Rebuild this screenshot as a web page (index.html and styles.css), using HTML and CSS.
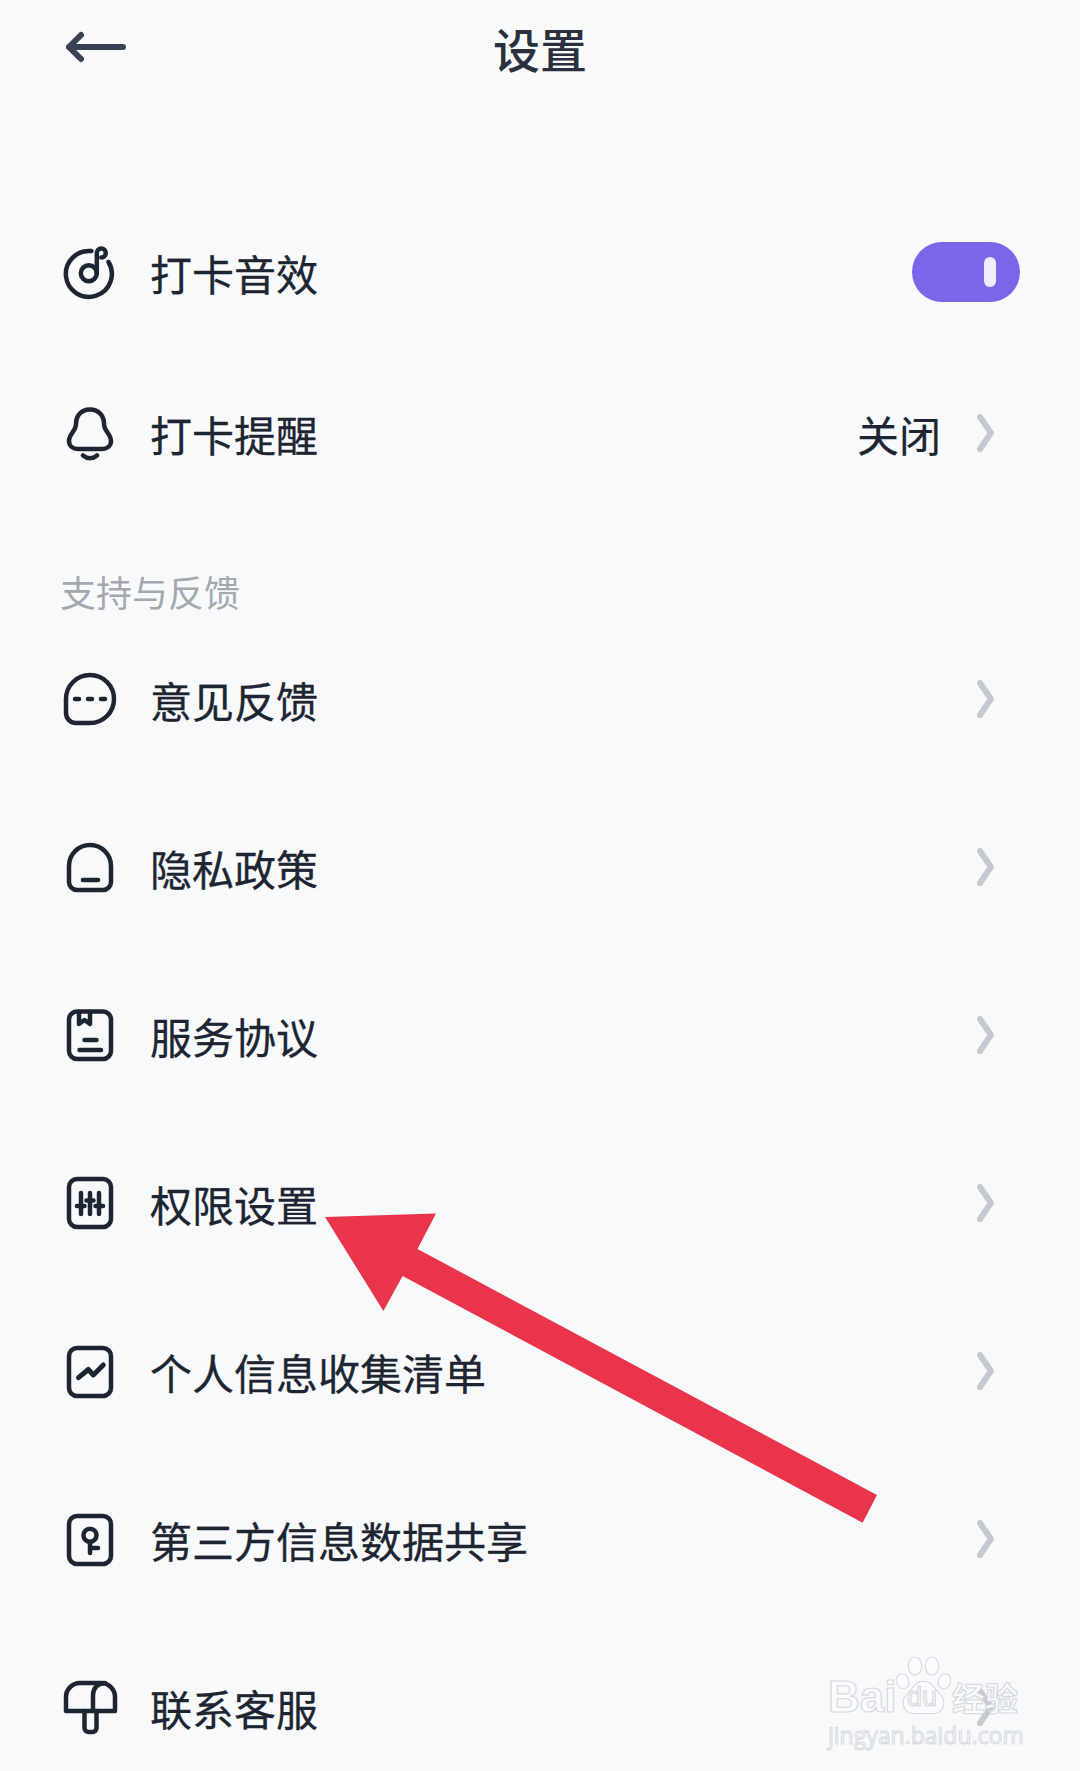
FILE: index.html
```html
<!DOCTYPE html>
<html lang="zh-CN">
<head>
  <meta charset="UTF-8">
  <title>设置</title>
  <link rel="stylesheet" href="styles.css">
</head>
<body>
  <div class="page">
    <header class="nav">
      <svg class="back" viewBox="0 0 68 36"><path d="M7 18H61M19 6L7 18L19 30"/></svg>
      <h1 class="nav-title">设置</h1>
    </header>

    <section class="group group-first">
      <div class="row row-tall">
        <svg class="icon" viewBox="0 0 60 60"><path d="M31.500 9.100A23 23 0 1 0 48.500 20"/><circle cx="28.800" cy="31.300" r="8"/><path d="M36.800 31V11a4.500 4.500 0 1 1 4.500 4.500"/></svg>
        <span class="label">打卡音效</span>
        <span class="toggle"><i class="knob"></i></span>
      </div>
      <div class="row row-tall">
        <svg class="icon" viewBox="0 0 60 60"><path d="M30 6.500C21 6.500 16 13 16 21C16 28 9 31 9 38C9 43 13 46 18 46H42C47 46 51 43 51 38C51 31 44 28 44 21C44 13 39 6.500 30 6.500Z"/><path d="M23 52.500Q30 58 37 52.500"/></svg>
        <span class="label">打卡提醒</span>
        <span class="value">关闭</span>
        <svg class="chevron" viewBox="0 0 17 38"><path d="M3 3L14 19L3 35"/></svg>
      </div>
    </section>

    <h2 class="group-title">支持与反馈</h2>

    <section class="group">
      <div class="row">
        <svg class="icon" viewBox="0 0 60 60"><path d="M30 6a24 24 0 0 1 0 48H16a10 10 0 0 1-10-10V30A24 24 0 0 1 30 6Z"/><path d="M15 30h4M28 30h4M41 30h4"/></svg>
        <span class="label">意见反馈</span>
        <svg class="chevron" viewBox="0 0 17 38"><path d="M3 3L14 19L3 35"/></svg>
      </div>
      <div class="row">
        <svg class="icon" viewBox="0 0 60 60"><path d="M9 29a21 21 0 0 1 42 0v16a8 8 0 0 1-8 8H17a8 8 0 0 1-8-8Z"/><path d="M23 43H38"/></svg>
        <span class="label">隐私政策</span>
        <svg class="chevron" viewBox="0 0 17 38"><path d="M3 3L14 19L3 35"/></svg>
      </div>
      <div class="row">
        <svg class="icon" viewBox="0 0 60 60"><rect x="9" y="6.500" width="42" height="47.500" rx="8"/><path d="M19 7V19L24.500 15L30 19V7"/><path d="M24.500 35H36.500M19.500 45H41"/></svg>
        <span class="label">服务协议</span>
        <svg class="chevron" viewBox="0 0 17 38"><path d="M3 3L14 19L3 35"/></svg>
      </div>
      <div class="row">
        <svg class="icon" viewBox="0 0 60 60"><rect x="9" y="6" width="42" height="48" rx="8"/><path d="M21 20V41M30 20V41M39 20V41M17 33H24.500M26.500 27.500H33.500M35.500 33H43"/></svg>
        <span class="label">权限设置</span>
        <svg class="chevron" viewBox="0 0 17 38"><path d="M3 3L14 19L3 35"/></svg>
      </div>
      <div class="row">
        <svg class="icon" viewBox="0 0 60 60"><rect x="9" y="7" width="42" height="48" rx="8"/><path class="thick" d="M18.500 36.700L28.300 28.500L33.300 34L43.300 24"/></svg>
        <span class="label">个人信息收集清单</span>
        <svg class="chevron" viewBox="0 0 17 38"><path d="M3 3L14 19L3 35"/></svg>
      </div>
      <div class="row">
        <svg class="icon" viewBox="0 0 60 60"><rect x="9" y="7" width="42" height="48" rx="8"/><circle cx="30" cy="26.300" r="6.500"/><path d="M30 33V44M30 39H38"/></svg>
        <span class="label">第三方信息数据共享</span>
        <svg class="chevron" viewBox="0 0 17 38"><path d="M3 3L14 19L3 35"/></svg>
      </div>
      <div class="row">
        <svg class="icon" viewBox="0 0 60 60"><path d="M6 34V20A14 14 0 0 1 20 6H41A14 14 0 0 1 55 20V34Z"/><path d="M33 34V18C33 11 38 6 45 6"/><path d="M24.500 34V51A4 4 0 0 0 28.500 55H32.500A4 4 0 0 0 36.500 51V34"/></svg>
        <span class="label">联系客服</span>
        <svg class="chevron" viewBox="0 0 17 38"><path d="M3 3L14 19L3 35"/></svg>
      </div>
    </section>

    <div class="watermark">
      <div class="wm-main">
        <span class="wm-latin">Bai</span>
        <span class="wm-paw">
          <svg viewBox="0 0 60 64"><ellipse cx="8" cy="27" rx="6.500" ry="8" transform="rotate(-20 8 27)"/><ellipse cx="21" cy="11" rx="7" ry="9.500"/><ellipse cx="39" cy="11" rx="7" ry="9.500"/><ellipse cx="52" cy="27" rx="6.500" ry="8" transform="rotate(20 52 27)"/><path d="M30 27C21 27 19 35 13 40C6 46 7 61 20 61H40C53 61 54 46 47 40C41 35 39 27 30 27Z"/></svg>
          <span class="wm-du">du</span>
        </span>
        <span class="wm-cjk">经验</span>
      </div>
      <div class="wm-url">jingyan.baidu.com</div>
    </div>

    <svg class="arrow" viewBox="0 0 1080 1771"><polygon points="325,1217 436,1213.500 417.500,1249 877,1495 862.600,1522.700 402.600,1276 383.400,1311"/></svg>
  </div>
</body>
</html>
```

FILE: styles.css
```css
body {
  margin: 0;
  background: #f8f9fb;
  font-family: "Noto Sans CJK SC", "Liberation Sans", sans-serif;
  color: #1c2531;
}

.page {
  position: relative;
  width: 1080px;
  height: 1771px;
  overflow: hidden;
}

.nav {
  position: relative;
  height: 94px;
  padding-bottom: 6px;
  display: flex;
  align-items: center;
  justify-content: center;
}

.nav-title {
  margin: 0;
  font-size: 47px;
  font-weight: 500;
  line-height: 1;
  color: #2a303c;
}

.back {
  position: absolute;
  left: 62px;
  top: 29px;
  width: 68px;
  height: 36px;
  fill: none;
  stroke: #3a4154;
  stroke-width: 6;
  stroke-linecap: round;
  stroke-linejoin: round;
}

.group-first {
  margin-top: 94px;
}

.row {
  height: 168px;
  display: flex;
  align-items: center;
  padding: 0 60px;
}

.row-tall {
  height: 161px;
}

.icon {
  width: 60px;
  height: 60px;
  margin-bottom: 6px;
  flex-shrink: 0;
  fill: none;
  stroke: #1c2531;
  stroke-width: 4.5;
  stroke-linecap: round;
  stroke-linejoin: round;
}

.icon .thick {
  stroke-width: 5;
}

.label {
  flex: 1;
  margin: 0 0 5px 30px;
  font-size: 42px;
  line-height: 1;
  -webkit-text-stroke: 0.3px #1c2531;
}

.row-tall .label {
  margin-bottom: 3px;
}

.value {
  font-size: 42px;
  line-height: 1;
  margin: 0 36px 3px 0;
  -webkit-text-stroke: 0.2px #1c2531;
}

.chevron {
  width: 17px;
  height: 38px;
  margin-right: 26px;
  margin-bottom: 7px;
  fill: none;
  stroke: #c4c9d1;
  stroke-width: 6;
  stroke-linecap: round;
  stroke-linejoin: round;
}

.row-tall .chevron {
  margin-bottom: 5px;
}

.toggle {
  width: 108px;
  height: 60px;
  margin-bottom: 6px;
  padding-right: 24px;
  box-sizing: border-box;
  border-radius: 30px;
  background: #7b66ea;
  display: flex;
  align-items: center;
  justify-content: flex-end;
}

.knob {
  width: 12px;
  height: 30px;
  border-radius: 6px;
  background: #f1eefc;
}

.group-title {
  margin: 50px 0 2px;
  padding-left: 60px;
  height: 50px;
  font-size: 36px;
  font-weight: 400;
  line-height: 50px;
  color: #a3a8b0;
}

.arrow {
  position: absolute;
  left: 0;
  top: 0;
  width: 1080px;
  height: 1771px;
  fill: #e9344a;
}

.watermark {
  position: absolute;
  left: 828px;
  top: 1655px;
  width: 200px;
  color: #fbfcfd;
  -webkit-text-stroke: 1.2px #d6d9de;
}

.wm-main {
  display: flex;
  align-items: flex-end;
  height: 62px;
}

.wm-latin {
  font-family: "Liberation Sans", sans-serif;
  font-weight: 700;
  font-size: 44px;
  line-height: 40px;
  width: 67px;
}

.wm-paw {
  position: relative;
  width: 57px;
  height: 62px;
  flex-shrink: 0;
}

.wm-paw svg {
  width: 57px;
  height: 62px;
  fill: #fbfcfd;
  stroke: #d6d9de;
  stroke-width: 1.2;
}

.wm-du {
  position: absolute;
  left: 12px;
  bottom: 6px;
  font-family: "Liberation Sans", sans-serif;
  font-size: 27px;
  line-height: 1;
}

.wm-cjk {
  font-size: 33px;
  font-weight: 700;
  line-height: 40px;
  white-space: nowrap;
}

.wm-url {
  margin-top: 3px;
  font-family: "Open Sans", sans-serif;
  font-size: 23px;
  line-height: 30px;
  white-space: nowrap;
  -webkit-text-stroke: 1px #d6d9de;
}
```
